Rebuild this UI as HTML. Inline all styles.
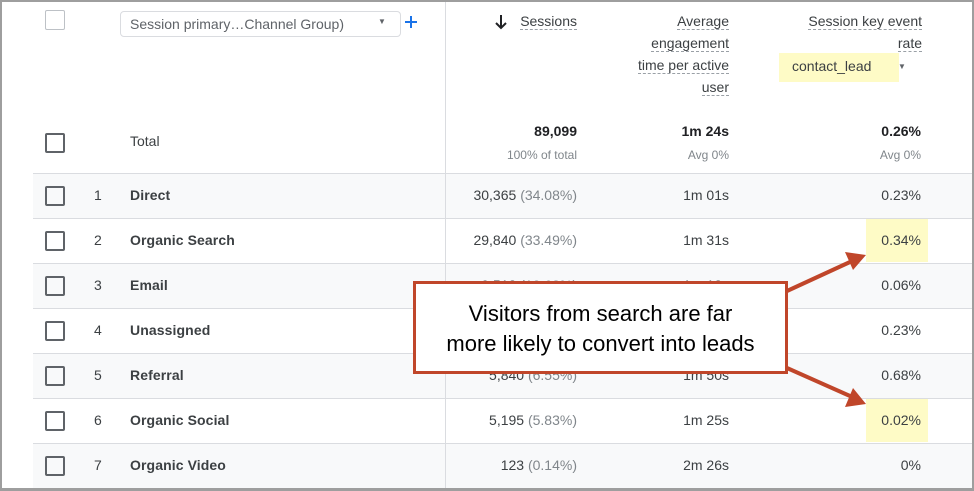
<!DOCTYPE html>
<html><head><meta charset="utf-8"><style>
*{margin:0;padding:0;box-sizing:border-box}
body{width:974px;height:491px;background:#fff;font-family:"Liberation Sans",Arial,sans-serif;color:#202124;position:relative;overflow:hidden}
.frame{position:absolute;left:0;top:0;width:974px;height:491px;border:2px solid #9e9e9e;border-bottom-width:3px;z-index:5;pointer-events:none}
.a{position:absolute;white-space:nowrap}
.cb{position:absolute;left:45px;width:20px;height:20px;border:2px solid #5f6368;border-radius:2px}
.row{position:absolute;left:33px;width:941px;height:45px;border-top:1px solid #dadce0}
.sh{background:#f8f9fa}
.num{left:94px;font-size:14px;color:#3c4043}
.nm{left:130px;font-size:14px;font-weight:bold;color:#3c4043;letter-spacing:.1px}
.r{text-align:right;font-size:14px;color:#3c4043}
.g{color:#80868b}
.hd{font-size:14px;color:#3c4043;text-align:right;line-height:22px}
.hd span{border-bottom:1.5px dashed #9aa0a6}
.hl{position:absolute;background:#fefbc6}
</style></head><body>
<div class="frame"></div>
<div class="cb" style="top:10px;border-color:#bdc1c6;border-width:1.5px"></div>
<div class="a" style="left:120px;top:11px;width:281px;height:26px;border:1px solid #dadce0;border-radius:4px;font-size:14px;color:#5f6368;padding:4px 0 0 9px">Session primary…Channel Group)<span style="position:absolute;left:257px;top:5px;font-size:8px">▼</span></div>
<svg class="a" style="left:404px;top:15px" width="14" height="14"><path d="M7 1V13M1 7H13" stroke="#1a73e8" stroke-width="2"/></svg>
<div class="a" style="left:445px;top:0;width:1px;height:491px;background:#dadce0"></div>
<svg class="a" style="left:494px;top:14px" width="14" height="16"><path d="M7 1V14M2 9L7 14L12 9" stroke="#202124" stroke-width="2" fill="none"/></svg>
<div class="a hd" style="left:500px;top:10px;width:77px"><span>Sessions</span></div>
<div class="a hd" style="left:580px;top:10px;width:149px"><span>Average</span><br><span>engagement</span><br><span>time per active</span><br><span>user</span></div>
<div class="a hd" style="left:760px;top:10px;width:162px"><span>Session key event</span><br><span>rate</span></div>
<div class="hl" style="left:779px;top:53px;width:120px;height:29px"></div>
<div class="a" style="left:792px;top:58px;font-size:14px;color:#3c4043">contact_lead</div>
<div class="a" style="left:898px;top:62px;font-size:8px;color:#5f6368">▼</div>
<div class="cb" style="top:133px"></div>
<div class="a" style="left:130px;top:133px;font-size:14px;color:#3c4043">Total</div>
<div class="a r" style="left:470px;width:107px;top:123px;font-weight:bold;color:#202124">89,099</div>
<div class="a r g" style="left:470px;width:107px;top:148px;font-size:12px">100% of total</div>
<div class="a r" style="left:620px;width:109px;top:123px;font-weight:bold;color:#202124">1m 24s</div>
<div class="a r g" style="left:620px;width:109px;top:148px;font-size:12px">Avg 0%</div>
<div class="a r" style="left:800px;width:121px;top:123px;font-weight:bold;color:#202124">0.26%</div>
<div class="a r g" style="left:800px;width:121px;top:148px;font-size:12px">Avg 0%</div>

<div class="row sh" style="top:173px"></div>
<div class="row" style="top:218px"></div>
<div class="row sh" style="top:263px"></div>
<div class="row" style="top:308px"></div>
<div class="row sh" style="top:353px"></div>
<div class="row" style="top:398px"></div>
<div class="row sh" style="top:443px"></div>
<div class="a" style="left:445px;top:173px;width:1px;height:318px;background:#dadce0"></div>
<div class="hl" style="left:866px;top:219px;width:62px;height:43px"></div>
<div class="hl" style="left:866px;top:399px;width:62px;height:43px"></div>

<div class="cb" style="top:186px"></div><div class="a num" style="top:187px">1</div><div class="a nm" style="top:187px">Direct</div>
<div class="a r" style="left:420px;width:157px;top:187px">30,365 <span class="g">(34.08%)</span></div><div class="a r" style="left:620px;width:109px;top:187px">1m 01s</div><div class="a r" style="left:800px;width:121px;top:187px">0.23%</div>
<div class="cb" style="top:231px"></div><div class="a num" style="top:232px">2</div><div class="a nm" style="top:232px">Organic Search</div>
<div class="a r" style="left:420px;width:157px;top:232px">29,840 <span class="g">(33.49%)</span></div><div class="a r" style="left:620px;width:109px;top:232px">1m 31s</div><div class="a r" style="left:800px;width:121px;top:232px">0.34%</div>
<div class="cb" style="top:276px"></div><div class="a num" style="top:277px">3</div><div class="a nm" style="top:277px">Email</div>
<div class="a r" style="left:420px;width:157px;top:277px">9,512 <span class="g">(10.68%)</span></div><div class="a r" style="left:620px;width:109px;top:277px">1m 12s</div><div class="a r" style="left:800px;width:121px;top:277px">0.06%</div>
<div class="cb" style="top:321px"></div><div class="a num" style="top:322px">4</div><div class="a nm" style="top:322px">Unassigned</div>
<div class="a r" style="left:800px;width:121px;top:322px">0.23%</div>
<div class="cb" style="top:366px"></div><div class="a num" style="top:367px">5</div><div class="a nm" style="top:367px">Referral</div>
<div class="a r" style="left:420px;width:157px;top:367px">5,840 <span class="g">(6.55%)</span></div><div class="a r" style="left:620px;width:109px;top:367px">1m 50s</div><div class="a r" style="left:800px;width:121px;top:367px">0.68%</div>
<div class="cb" style="top:411px"></div><div class="a num" style="top:412px">6</div><div class="a nm" style="top:412px">Organic Social</div>
<div class="a r" style="left:420px;width:157px;top:412px">5,195 <span class="g">(5.83%)</span></div><div class="a r" style="left:620px;width:109px;top:412px">1m 25s</div><div class="a r" style="left:800px;width:121px;top:412px">0.02%</div>
<div class="cb" style="top:456px"></div><div class="a num" style="top:457px">7</div><div class="a nm" style="top:457px">Organic Video</div>
<div class="a r" style="left:420px;width:157px;top:457px">123 <span class="g">(0.14%)</span></div><div class="a r" style="left:620px;width:109px;top:457px">2m 26s</div><div class="a r" style="left:800px;width:121px;top:457px">0%</div>

<div class="a" style="left:413px;top:281px;width:375px;height:93px;background:#fff;border:3px solid #c0462a;text-align:center;font-size:22px;line-height:30px;color:#000;padding-top:15px;z-index:3">Visitors from search are far<br>more likely to convert into leads</div>
<svg class="a" style="left:0;top:0;z-index:4" width="974" height="491">
<g stroke="#c0462a" stroke-width="4" fill="#c0462a">
<line x1="787" y1="291" x2="850" y2="262"/>
<polygon points="866,255 845,252 853,270" stroke="none"/>
<line x1="787" y1="368" x2="850" y2="396"/>
<polygon points="866,404 853,388 845,407" stroke="none"/>
</g></svg>
</body></html>
